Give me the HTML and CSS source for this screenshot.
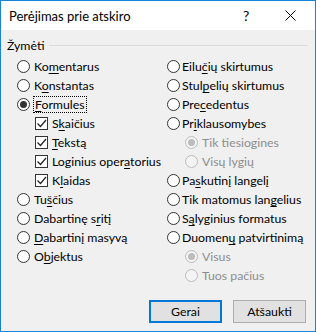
FILE: index.html
```html
<!DOCTYPE html>
<html>
<head>
<meta charset="utf-8">
<link rel="stylesheet" href="styles.css">
</head>
<body>
<div class="window">
  <div class="titlebar">
    <span class="title">Perėjimas prie atskiro</span>
    <span class="help">?</span>
    <svg class="close" width="11" height="11" viewBox="0 0 11 11"><path d="M0.5 0.5 L10.5 10.5 M10.5 0.5 L0.5 10.5" stroke="#000" stroke-width="1" fill="none"/></svg>
  </div>
  <div class="body">
    <div class="group-label"><span>Žymėti</span><div class="rule"></div></div>
    <div class="cols">
      <div class="col left">
        <div class="row"><span class="radio"></span><span class="lbl">Ko<u>m</u>entarus</span></div>
        <div class="row"><span class="radio"></span><span class="lbl">K<u>o</u>nstantas</span></div>
        <div class="row"><span class="radio on"></span><span class="lbl focus"><u>F</u>ormules</span></div>
        <div class="row sub"><span class="check"><svg width="11" height="11" viewBox="0 0 11 11"><path d="M1.5 5.5 L4.5 8.5 L10 2" stroke="#222" stroke-width="1.2" fill="none"/></svg></span><span class="lbl">S<u>k</u>aičius</span></div>
        <div class="row sub"><span class="check"><svg width="11" height="11" viewBox="0 0 11 11"><path d="M1.5 5.5 L4.5 8.5 L10 2" stroke="#222" stroke-width="1.2" fill="none"/></svg></span><span class="lbl"><u>T</u>ekstą</span></div>
        <div class="row sub"><span class="check"><svg width="11" height="11" viewBox="0 0 11 11"><path d="M1.5 5.5 L4.5 8.5 L10 2" stroke="#222" stroke-width="1.2" fill="none"/></svg></span><span class="lbl">Loginius oper<u>a</u>torius</span></div>
        <div class="row sub"><span class="check"><svg width="11" height="11" viewBox="0 0 11 11"><path d="M1.5 5.5 L4.5 8.5 L10 2" stroke="#222" stroke-width="1.2" fill="none"/></svg></span><span class="lbl">K<u>l</u>aidas</span></div>
        <div class="row"><span class="radio"></span><span class="lbl">Tu<u>š</u>čius</span></div>
        <div class="row"><span class="radio"></span><span class="lbl">Dabartinę s<u>r</u>itį</span></div>
        <div class="row"><span class="radio"></span><span class="lbl"><u>D</u>abartinį masyvą</span></div>
        <div class="row"><span class="radio"></span><span class="lbl">O<u>b</u>jektus</span></div>
      </div>
      <div class="col right">
        <div class="row"><span class="radio"></span><span class="lbl">Eilu<u>č</u>ių skirtumus</span></div>
        <div class="row"><span class="radio"></span><span class="lbl">Stul<u>p</u>elių skirtumus</span></div>
        <div class="row"><span class="radio"></span><span class="lbl">Pre<u>c</u>edentus</span></div>
        <div class="row"><span class="radio"></span><span class="lbl">Pr<u>i</u>klausomybes</span></div>
        <div class="row sub dis"><span class="radio on"></span><span class="lbl">Tik tiesiogines</span></div>
        <div class="row sub dis"><span class="radio"></span><span class="lbl">Visų lygių</span></div>
        <div class="row"><span class="radio"></span><span class="lbl">Pa<u>s</u>kutinį langelį</span></div>
        <div class="row"><span class="radio"></span><span class="lbl">Tik matomus lan<u>g</u>elius</span></div>
        <div class="row"><span class="radio"></span><span class="lbl">S<u>ą</u>lyginius formatus</span></div>
        <div class="row"><span class="radio"></span><span class="lbl">Duomen<u>ų</u> patvirtinimą</span></div>
        <div class="row sub dis"><span class="radio on"></span><span class="lbl">Visus</span></div>
        <div class="row sub dis"><span class="radio"></span><span class="lbl">Tuos pačius</span></div>
      </div>
    </div>
    <div class="buttons">
      <button class="btn default">Gerai</button>
      <button class="btn">Atšaukti</button>
    </div>
  </div>
</div>
</body>
</html>
```
FILE: styles.css
```css
html, body { margin: 0; padding: 0; }
body { width: 316px; height: 332px; overflow: hidden; font-family: Lato, "Noto Sans", sans-serif; font-size: 12.3px; color: #000; }
.window { width: 316px; height: 332px; box-sizing: border-box; border: 1px solid #1883d7; background: #f0f0f0; display: flex; flex-direction: column; }
.titlebar { height: 29px; background: #fff; display: flex; align-items: center; padding-left: 8px; }
.title { font-size: 13px; flex: 1; }
.help { font-size: 14px; width: 12px; margin-right: 30px; }
.close { margin-right: 19px; }
.body { flex: 1; display: flex; flex-direction: column; padding: 6px 0 0 6px; }
.group-label { display: flex; align-items: center; height: 18px; padding-right: 7px; }
.group-label .rule { flex: 1; height: 1px; background: #dcdcdc; margin-left: 4px; margin-top: 1px; }
.cols { display: flex; margin-top: 3px; }
.col { display: flex; flex-direction: column; }
.left { width: 150px; padding-left: 10px; }
.right { padding-left: 0; }
.row { height: 19px; display: flex; align-items: center; white-space: nowrap; }
.left .sub { padding-left: 18px; }
.right .sub { padding-left: 18px; }
.radio { width: 13px; height: 13px; box-sizing: border-box; border: 1px solid #333; border-radius: 50%; background: #fff; margin-right: 4px; display: flex; align-items: center; justify-content: center; flex: none; }
.right .radio { margin-right: 2px; }
.right .sub .radio { margin-right: 4px; }
.radio.on::after { content: ""; width: 7px; height: 7px; border-radius: 50%; background: #333; }
.check { width: 13px; height: 13px; box-sizing: border-box; border: 1px solid #333; background: #fff; margin-right: 4px; display: flex; align-items: center; justify-content: center; flex: none; }
.dis .radio { border-color: #bcbcbc; background: #f4f4f4; }
.dis .radio.on::after { background: #bcbcbc; }
.dis .lbl { color: #8d8d8d; }
.lbl u { text-decoration-thickness: 1px; text-underline-offset: 2px; }
.focus { outline: 1px dotted #000; outline-offset: 0; padding: 0 1px; }
.buttons { display: flex; margin-top: auto; margin-bottom: 8px; padding-left: 142px; gap: 11px; }
.btn { width: 73px; height: 23px; box-sizing: border-box; font-family: inherit; font-size: 12.3px; background: #e1e1e1; border: 1px solid #adadad; padding: 0; color: #000; }
.btn.default { border: 2px solid #0078d7; }
```
